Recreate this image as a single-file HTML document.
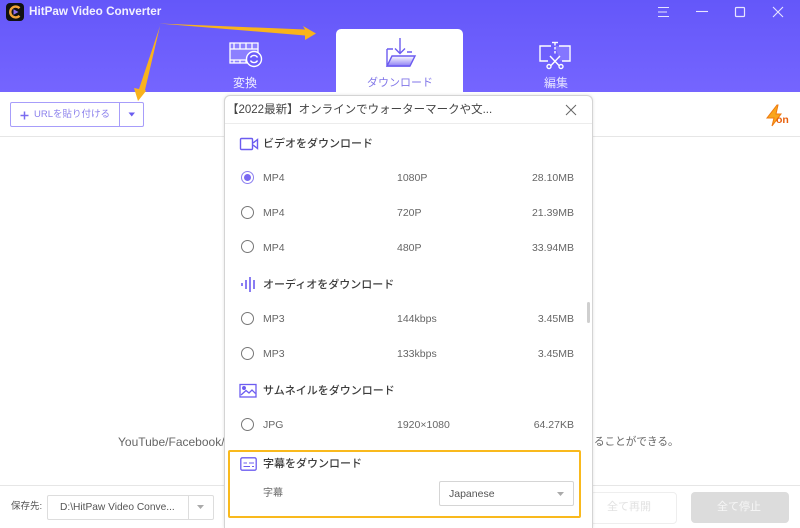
<!DOCTYPE html>
<html lang="ja"><head><meta charset="utf-8">
<style>
html,body{margin:0;padding:0;width:800px;height:528px;overflow:hidden}
body{position:relative;background:#fff;font-family:"Liberation Sans","Noto Sans CJK JP",sans-serif;color:#555}
#w{position:absolute;left:0;top:0;width:800px;height:528px;overflow:hidden}
.a{position:absolute;white-space:nowrap}
.hd{left:0;top:0;width:800px;height:92px;background:linear-gradient(#6457f9,#7565ff)}
.t{font-size:10.5px;line-height:14px;color:#666}
.h{font-size:11px;line-height:16px;color:#3c3c3c;font-weight:500}
.r{width:11px;height:11px;border:1.2px solid #777;border-radius:50%;background:#fff}
</style></head><body><div id="w">
<div class="a hd"></div>
<div class="a" style="left:6px;top:3px;width:18px;height:18px;background:#111;border-radius:4px"></div>
<svg class="a" style="left:6px;top:3px" width="18" height="18" viewBox="0 0 18 18"><path d="M13.5 5.2A5.4 5.4 0 1 0 13.5 12.8" fill="none" stroke="#f2a33a" stroke-width="2.4"/><path d="M7.5 6.3L12.5 9L7.5 11.7Z" fill="#8a6cf0"/></svg>
<div class="a" style="left:29px;top:4px;font-size:11.7px;line-height:16px;font-weight:700;color:#f2f0ff">HitPaw Video Converter</div>

<svg class="a" style="left:655px;top:0" width="145" height="24" viewBox="0 0 145 24" fill="none" stroke="#e8e5ff" stroke-width="1.1">
<path d="M3 7.5H14M3 12H12M3 16.5H14" stroke-width="1"/><path d="M41 11.5H53"/><rect x="80.5" y="7.5" width="9" height="9" rx="1" stroke-width="1.2"/><path d="M118 7L128 17M128 7L118 17"/></svg>

<div class="a" style="left:336px;top:29px;width:127px;height:64px;background:#fff;border-radius:5px 5px 0 0"></div>

<svg class="a" style="left:228px;top:41px" width="36" height="28" viewBox="0 0 36 28" fill="none" stroke="#fff" stroke-width="1.3">
<path d="M2 2H30V22H2Z" fill="#8c80ff"/><path d="M2 8H30M2 19H24M6 2V8M12 2V8M18 2V8M24 2V8M6 19V22M12 19V22M18 19V22"/>
<circle cx="26" cy="18" r="7.5" fill="#6b5cfb" stroke-width="1.4"/><path d="M22.5 16.5A4 4 0 0 1 29.5 16.5M29.5 19.5A4 4 0 0 1 22.5 19.5" stroke-width="1.4"/></svg>
<div class="a" style="left:233px;top:75px;font-size:12px;line-height:16px;color:#f0eeff">変換</div>

<svg class="a" style="left:384px;top:37px" width="34" height="32" viewBox="0 0 34 32" fill="none" stroke="#6c5cf0" stroke-width="1.4">
<defs><linearGradient id="g" x1="0" y1="0" x2="0" y2="1"><stop offset="0" stop-color="#fff"/><stop offset="1" stop-color="#8d7ff5"/></linearGradient></defs>
<path d="M16 1V16M11 11.5L16 16.5L21 11.5"/><path d="M3 12V29H26"/><path d="M3 12H9M23 15H28" />
<path d="M8 19H31L26 29H3Z" fill="url(#g)"/></svg>
<div class="a" style="left:367px;top:75px;font-size:11px;line-height:16px;color:#8176e8">ダウンロード</div>

<svg class="a" style="left:538px;top:41px" width="34" height="29" viewBox="0 0 34 29" fill="none" stroke="#fff" stroke-width="1.4">
<path d="M17 5H31V20H22" fill="#8477ff" stroke="none"/><path d="M13 5H2V20H10M21 5H32V20H24"/><path d="M17 2V14" stroke-dasharray="2.5 1.5"/><path d="M14 1.5H20" />
<path d="M12 15L21 24.5M22 15L13 24.5"/><circle cx="11" cy="25.5" r="2"/><circle cx="23" cy="25.5" r="2"/></svg>
<div class="a" style="left:544px;top:75px;font-size:12px;line-height:16px;color:#e5e2ff">編集</div>

<div class="a" style="left:10px;top:102px;width:132px;height:23px;border:1px solid #a79dfa;border-radius:2px"></div>
<div class="a" style="left:119px;top:102px;width:1px;height:25px;background:#a79dfa"></div>
<svg class="a" style="left:19px;top:110px" width="11" height="11"><path d="M5.5 1.5V9.5M1.5 5.5H9.5" stroke="#7a6cf0" stroke-width="1.5"/></svg>
<div class="a" style="left:34px;top:108px;font-size:9.5px;line-height:14px;color:#8b80ec">URLを貼り付ける</div>
<svg class="a" style="left:127px;top:111px" width="10" height="8"><path d="M1.5 1.5H8L4.75 5.5Z" fill="#6a5cf0"/></svg>

<svg class="a" style="left:764px;top:103px" width="28" height="24" viewBox="0 0 28 24"><path d="M13 2L3 15H10L8 23L17 11H12L14 2Z" fill="#f9a61c" stroke="#ef7a10" stroke-width="1"/></svg>
<div class="a" style="left:776px;top:113px;font-size:10.5px;line-height:14px;font-weight:700;color:#e8600c">on</div>

<div class="a" style="left:0;top:136px;width:800px;height:1px;background:#e6e6e6"></div>
<div class="a" style="left:118px;top:434px;font-size:12px;line-height:16px;color:#666">YouTube/Facebook/</div>
<div class="a" style="left:594px;top:434px;font-size:10.6px;line-height:16px;color:#666">ることができる。</div>
<div class="a" style="left:0;top:485px;width:800px;height:1px;background:#e6e6e6"></div>

<div class="a" style="left:11px;top:500px;font-size:9.5px;line-height:14px;color:#555">保存先:</div>
<div class="a" style="left:47px;top:495px;width:165px;height:23px;border:1px solid #ddd;border-radius:2px"></div>
<div class="a" style="left:188px;top:495px;width:1px;height:25px;background:#ddd"></div>
<div class="a" style="left:60px;top:501px;font-size:10.2px;line-height:14px;color:#555">D:\HitPaw Video Conve...</div>
<svg class="a" style="left:196px;top:504px" width="10" height="7"><path d="M1 1H8L4.5 5Z" fill="#aaa"/></svg>
<div class="a" style="left:590px;top:492px;width:85px;height:30px;border:1px solid #eee;border-radius:4px"></div>
<div class="a" style="left:607px;top:500px;font-size:11px;line-height:14px;color:#e2e2e2">全て再開</div>
<div class="a" style="left:691px;top:492px;width:98px;height:31px;background:#dcdcdc;border-radius:4px"></div>
<div class="a" style="left:717px;top:500px;font-size:11px;line-height:14px;color:#f6f6f6">全て停止</div>

<!-- modal -->
<div class="a" style="left:224px;top:95px;width:369px;height:433px;background:#fff;border-radius:6px 6px 0 0;border:1px solid #d4d4d4;border-bottom:0;box-sizing:border-box;box-shadow:0 0 3px rgba(0,0,0,.12)"></div>
<div class="a" style="left:225px;top:123px;width:367px;height:1px;background:#ececec"></div>
<div class="a" style="left:227px;top:102px;font-size:11.5px;line-height:16px;color:#444">【2022最新】オンラインでウォーターマークや文...</div>
<svg class="a" style="left:564px;top:103px" width="14" height="14"><path d="M2 2L12 12M12 2L2 12" stroke="#666" stroke-width="1"/></svg>

<svg class="a" style="left:239px;top:136px" width="20" height="16" viewBox="0 0 20 16" fill="none" stroke="#6c5cf0" stroke-width="1.4"><rect x="1.5" y="2.5" width="12" height="11" rx="1"/><path d="M14 7L18.5 3.5V12.5L14 9"/></svg>
<div class="a h" style="left:263px;top:136px">ビデオをダウンロード</div>

<div class="a r" style="left:241px;top:171px;border-color:#8d80f0"></div>
<div class="a" style="left:244px;top:174px;width:7px;height:7px;border-radius:50%;background:#7a69f2"></div>
<div class="a t" style="left:263px;top:171px">MP4</div><div class="a t" style="left:397px;top:171px">1080P</div><div class="a t" style="right:226px;top:171px">28.10MB</div>

<div class="a r" style="left:241px;top:206px"></div>
<div class="a t" style="left:263px;top:206px">MP4</div><div class="a t" style="left:397px;top:206px">720P</div><div class="a t" style="right:226px;top:206px">21.39MB</div>

<div class="a r" style="left:241px;top:240px"></div>
<div class="a t" style="left:263px;top:241px">MP4</div><div class="a t" style="left:397px;top:241px">480P</div><div class="a t" style="right:226px;top:241px">33.94MB</div>

<svg class="a" style="left:240px;top:276px" width="18" height="17" viewBox="0 0 18 17" stroke="#6c5cf0" stroke-width="1.6"><path d="M2 7V10M6 4V13M10 1V16M14 4V13" /></svg>
<div class="a h" style="left:263px;top:277px">オーディオをダウンロード</div>

<div class="a r" style="left:241px;top:312px"></div>
<div class="a t" style="left:263px;top:312px">MP3</div><div class="a t" style="left:397px;top:312px">144kbps</div><div class="a t" style="right:226px;top:312px">3.45MB</div>

<div class="a r" style="left:241px;top:347px"></div>
<div class="a t" style="left:263px;top:347px">MP3</div><div class="a t" style="left:397px;top:347px">133kbps</div><div class="a t" style="right:226px;top:347px">3.45MB</div>

<svg class="a" style="left:239px;top:383px" width="19" height="16" viewBox="0 0 19 16" fill="none" stroke="#6c5cf0" stroke-width="1.3"><rect x="1" y="1.5" width="16" height="12.5"/><circle cx="5" cy="5" r="1.3" fill="#6c5cf0"/><path d="M2 12L7 7.5L10 10L13 7L16.5 10.5"/></svg>
<div class="a h" style="left:263px;top:383px">サムネイルをダウンロード</div>

<div class="a r" style="left:241px;top:418px"></div>
<div class="a t" style="left:263px;top:418px">JPG</div><div class="a t" style="left:397px;top:418px">1920×1080</div><div class="a t" style="right:226px;top:418px">64.27KB</div>

<div class="a" style="left:587px;top:302px;width:3px;height:21px;background:#cfcfcf;border-radius:2px"></div>

<div class="a" style="left:228px;top:450px;width:349px;height:64px;border:2px solid #f9b91d;border-radius:2px"></div>
<svg class="a" style="left:240px;top:457px" width="18" height="15" viewBox="0 0 18 15" fill="none" stroke="#6c5cf0"><rect x=".8" y=".8" width="15.4" height="12.4" rx="1.5" stroke-width="1.3"/><path d="M3.5 6H7M9 6H14M3.5 9.5H10M12 9.5H14" stroke-width="1.1"/></svg>
<div class="a h" style="left:263px;top:456px">字幕をダウンロード</div>
<div class="a t" style="left:263px;top:487px;font-size:10px">字幕</div>
<div class="a" style="left:439px;top:481px;width:133px;height:23px;border:1px solid #d5d5d5;border-radius:2px"></div>
<div class="a" style="left:449px;top:487px;font-size:10.5px;line-height:14px;color:#555">Japanese</div>
<svg class="a" style="left:556px;top:491px" width="10" height="7"><path d="M1 1H8L4.5 5Z" fill="#aaa"/></svg>

<!-- arrows -->
<svg class="a" style="left:0;top:0" width="800" height="528" viewBox="0 0 800 528" fill="#f9b31c">
<path d="M159 23.5L305 29.5L303 26L316 33.5L305 40L305 35.5Z"/>
<path d="M160 26L139 89L134 88L138 101L146 91L145 90Z"/>
</svg>
</div></body></html>
